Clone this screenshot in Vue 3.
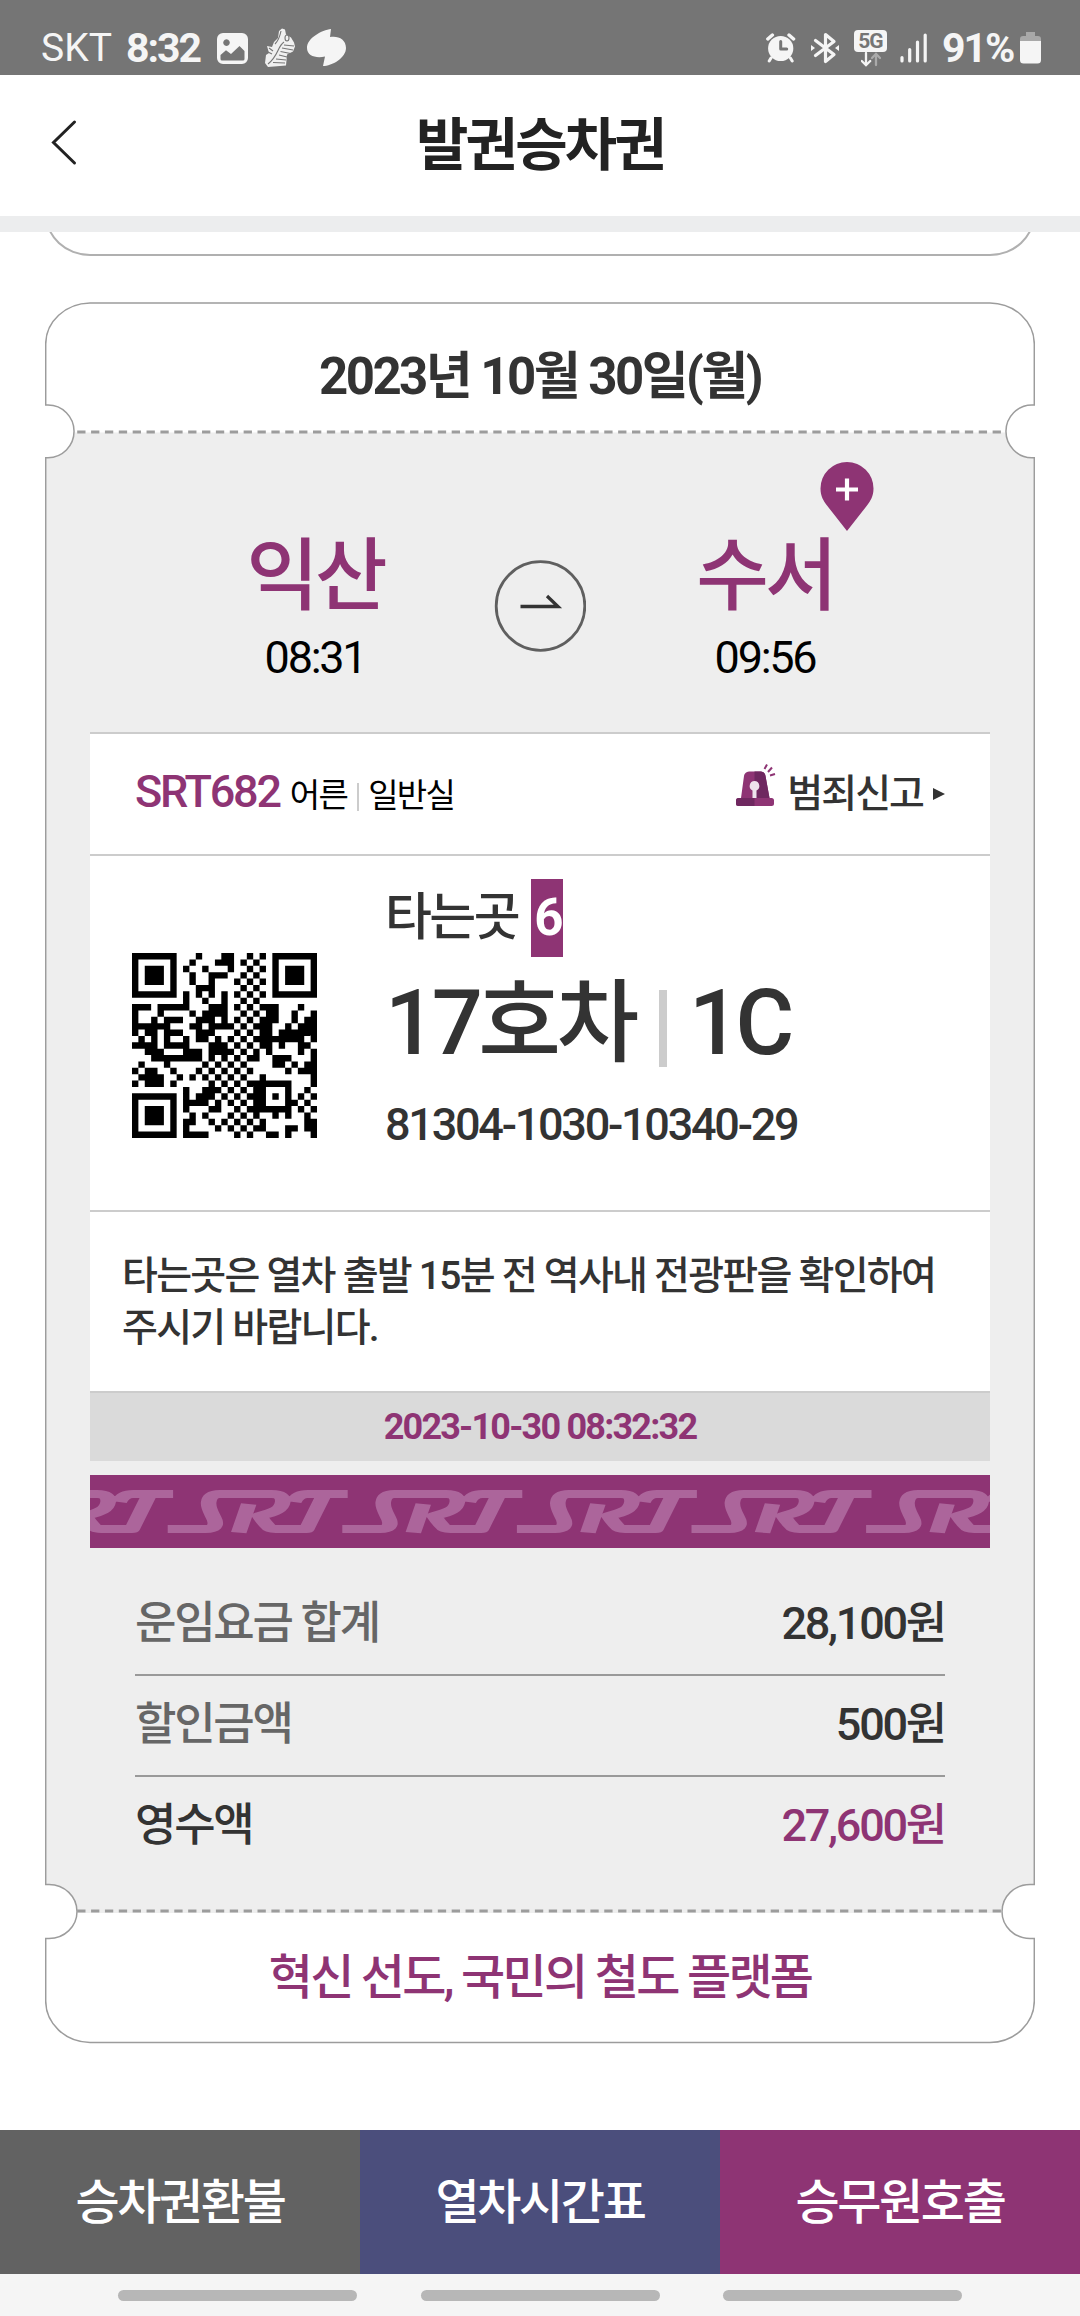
<script setup>
const qrRows = [
  '11111110001000110010101111111',
  '10000010010001110101001000001',
  '10111010100100010010101011101',
  '10111010010011100101001011101',
  '10111010010010001010101011101',
  '10000010001110000101001000001',
  '11111110101010101010101111111',
  '00000000100100100101000000000',
  '11101111100011101010111000100',
  '10001000010111100101011001001',
  '10010111001110101010111001011',
  '11111100011011110101110010111',
  '10110111001110001010110111111',
  '01010100101101010101111111101',
  '11110111100011101010110100110',
  '00111000111011110101010000101',
  '00011111111010101011001110001',
  '01000100000101010100001101011',
  '10110010001010101010000010111',
  '01111001010101010100100000001',
  '10111010000010101011111110001',
  '00000000100111010101100010010',
  '11111110101110101011101010101',
  '10000010111101010101100011010',
  '10111010100011001011111110101',
  '10111010010100010101001010010',
  '10111010110010101010100000011',
  '10000010100001010101100011011',
  '11111110111100001010011010001',
]
const qrPath = qrRows
  .flatMap((row, y) => [...row].map((c, x) => (c === '1' ? `M${x} ${y}h1v1h-1z` : '')))
  .join('')

const fares = [
  { label: '운임요금 합계', amount: '28,100원' },
  { label: '할인금액', amount: '500원' },
  { label: '영수액', amount: '27,600원', total: true },
]
const actions = [
  { label: '승차권환불', kind: 'refund' },
  { label: '열차시간표', kind: 'timetable' },
  { label: '승무원호출', kind: 'crew' },
]
const marks = [-98.9, 75.7, 250.3, 424.9, 599.5, 774.1]
</script>

<template>
  <div class="screen">
    <div class="status">
      <span class="carrier">SKT</span>
      <span class="clock">8:32</span>
      <svg class="s-gallery" width="31" height="31" viewBox="0 0 31 31">
        <path fill-rule="evenodd" fill="#f5f5f5" d="M6 0h19a6 6 0 0 1 6 6v19a6 6 0 0 1-6 6H6a6 6 0 0 1-6-6V6a6 6 0 0 1 6-6zM9.500 6.300a3.300 3.300 0 1 0 .01 0zM3.500 22v4q0 1.500 1.500 1.500h21q1.500 0 1.500-1.500v-8l-5-5-8.500 8-5-3.800z" />
      </svg>
      <svg class="s-shoe" width="32" height="40" viewBox="0 0 32 40">
        <path fill="#f0f0f0" d="M15 3l3-2.500 3 1 1 5 5 3 3 5 1 4-2 5-6 3-1 11-18 1.500-3-4 1-8 3-2-2-7 5 1 2-5 4-4z" />
        <g fill="none" stroke="#757575" stroke-width="1.100">
          <path d="M20 14C13 19 15 27 4 36M20 17l10 1M18 20l11 2M16.500 23.500l10 2M15 27l8 2M12 31l10 1M9 34.500l12 .5M17 3c-1 5-2 9-6 13M5 20l4 3M4 24l4 2" />
          <ellipse cx="23" cy="10" rx="2" ry="3" />
        </g>
      </svg>
      <svg class="s-talk" width="40" height="38" viewBox="0 0 40 38">
        <path fill="#f5f5f5" d="M24 0C15 1 0 9 0 19c0 8 9 10.500 18 8.500L16 37c9 0 23-8 23-18 0-9-8-12.500-16-11z" />
      </svg>
      <span class="spacer"></span>
      <svg class="s-alarm" width="30" height="30" viewBox="0 0 30 30">
        <circle cx="14.700" cy="15.500" r="12.600" fill="#f5f5f5" />
        <path d="M1.800 6l4.600-4M27.600 6l-4.600-4" stroke="#f5f5f5" stroke-width="3.400" stroke-linecap="round" />
        <path d="M5 25l-1.800 3M24.400 25l1.800 3" stroke="#f5f5f5" stroke-width="3" stroke-linecap="round" />
        <path d="M14.700 8.500v7.500h6" fill="none" stroke="#757575" stroke-width="3" stroke-linejoin="round" stroke-linecap="round" />
      </svg>
      <svg class="s-bt" width="28" height="32" viewBox="0 0 28 32">
        <path d="M4.500 8.500L23 22.500 14.500 29.500V2.500L23 9.500 4.500 23.500" fill="none" stroke="#f5f5f5" stroke-width="3.200" stroke-linejoin="round" stroke-linecap="round" />
        <path d="M0 13v6l4-3zM28 13v6l-4-3z" fill="#f5f5f5" />
      </svg>
      <div class="net">
        <span class="net-tag">5G</span>
        <svg width="20" height="15" viewBox="0 0 20 15">
          <path d="M5 1v12M.8 9L5 13.200 9.200 9" fill="none" stroke="#f5f5f5" stroke-width="2.300" stroke-linecap="round" />
          <path d="M15 13V2M11 6l4-4.200L19 6" fill="none" stroke="#aaa" stroke-width="2.300" stroke-linecap="round" />
        </svg>
      </div>
      <svg class="s-sig" width="28" height="30" viewBox="0 0 28 30">
        <path d="M2 24.500v3.500M9.700 16.500V28M17.500 9V28M25.200 2V28" stroke="#f5f5f5" stroke-width="3.200" stroke-linecap="round" />
      </svg>
      <span class="charge">91%</span>
      <svg class="s-bat" width="22" height="32" viewBox="0 0 22 32">
        <path d="M6 0h9v4h3q3 0 3 3v3H0V7q0-3 3-3h3z" fill="#a8a8a8" />
        <path d="M0 9h21v19q0 3.500-3.500 3.500h-14Q0 31.500 0 28z" fill="#f5f5f5" />
      </svg>
    </div>

    <header class="topbar">
      <svg class="back" width="30" height="48" viewBox="0 0 30 48">
        <path d="M24.500 3L3.500 23.500 24.500 44" fill="none" stroke="#222" stroke-width="3" stroke-linecap="round" />
      </svg>
      <h1>발권승차권</h1>
    </header>
    <div class="rule"></div>

    <div class="previous"><div class="previous-card"></div></div>

    <article class="ticket">
      <svg class="frame" width="990" height="1742" viewBox="0 0 990 1742">
        <path fill="#eee" d="M.7 155.700H3A26 26.300 0 0 0 29 130.500H961A26 26.300 0 0 0 987 155.700H989.300V1582.500H985A28.500 27 0 0 0 956 1611H33A28.500 27 0 0 0 5 1582.500H.7z" />
        <path fill="none" stroke="#9c9c9c" stroke-width="1.500" d="M.7 103V42A45 41 0 0 1 45 1H945A45 41 0 0 1 989.300 42V103H987A26 26.300 0 0 0 987 155.700H989.300V1582.500H985A28 27 0 0 0 985 1636.500H989.300V1699A45 41.500 0 0 1 945 1740.500H45A45 41.500 0 0 1 .7 1699V1636.500H4A28 27 0 0 0 4 1582.500H.7V155.700H3A26 26.300 0 0 0 3 103z" />
        <path fill="none" stroke="#9c9c9c" stroke-width="3" stroke-dasharray="8.300 5.570" d="M32.200 130H956.500M32.200 1609H956.500" />
      </svg>

      <h2 class="date">2023년 10월 30일(월)</h2>

      <section class="route">
        <div class="station">
          <strong>익산</strong>
          <span>08:31</span>
        </div>
        <svg class="direction" width="92" height="92" viewBox="0 0 92 92">
          <circle cx="46.500" cy="46" r="44.300" fill="none" stroke="#5f5f5f" stroke-width="2.800" />
          <path d="M26.500 46.500H64L53 36" fill="none" stroke="#333" stroke-width="3.300" />
        </svg>
        <div class="station">
          <strong>수서</strong>
          <span>09:56</span>
          <svg class="pin" width="54" height="70" viewBox="0 0 54 70">
            <path fill="#8e3474" d="M27 0A26.500 26.500 0 0 1 53.500 26.500C53.500 34 50.500 39 47 43.500L27 69 7 43.500C3.500 39 .5 34 .5 26.500A26.500 26.500 0 0 1 27 0z" />
            <path d="M16 27.500h22M27 16.500v22" stroke="#fff" stroke-width="4.200" />
          </svg>
        </div>
      </section>

      <section class="panel">
        <div class="train">
          <strong>SRT682</strong>
          <span class="grade">어른</span>
          <i></i>
          <span class="grade">일반실</span>
          <div class="report">
            <svg width="40" height="43" viewBox="0 0 40 43">
              <path fill="#8e3474" d="M5 34L8 12Q8.500 8 13 7.500H25Q29 8 29.500 12L33.500 34z" />
              <path fill="#6f2860" d="M18.500 7.500H25Q29 8 29.500 12L33.500 34H18.500z" />
              <rect x="0" y="34" width="38" height="8" rx="2.500" fill="#8e3474" />
              <path fill="#6f2860" d="M2.500 34H18.500V42H2.500Q0 42 0 39.500V36.500Q0 34 2.500 34z" />
              <path fill="#eee3ec" d="M18.500 17a5 5 0 0 1 2 9.500v7.500h-4v-7.500a5 5 0 0 1 2-9.500z" />
              <path d="M28.500 5L31 .5M32 8l4-4.500M34 11.500l5-1.500" stroke="#8e3474" stroke-width="2" />
            </svg>
            <span>범죄신고</span>
            <b></b>
          </div>
        </div>

        <div class="seat">
          <svg class="qr" width="185" height="185" viewBox="0 0 29 29">
            <path :d="qrPath" fill="#000" />
          </svg>
          <div class="seat-text">
            <p class="platform"><span>타는곳</span><em>6</em></p>
            <p class="car"><span>17호차</span><i></i><span>1C</span></p>
            <p class="serial">81304-1030-10340-29</p>
          </div>
        </div>

        <p class="notice">타는곳은 열차 출발 15분 전 역사내 전광판을 확인하여<br />주시기 바랍니다.</p>
        <p class="stamp">2023-10-30 08:32:32</p>
      </section>

      <svg class="band" width="900" height="73" viewBox="0 0 900 73">
        <rect width="900" height="73" fill="#8e3474" />
        <g fill="none" stroke="#ac659b" stroke-width="7.800" stroke-linejoin="round">
          <path
            v-for="x in marks"
            :key="x"
            :transform="`translate(${x} 0) scale(2 1)`"
            d="M1 54H20Q26 54 24.500 45C23 38 21 33 21.500 27Q22 19 27 19H53Q59 19 58.500 27C58 34 55 37 47 41Q49 47 51 51Q52 54 55 54H70.500L78.500 22M36.500 57.700L41.500 29M64 27Q66 19 71 19H91"
          />
        </g>
      </svg>

      <dl class="fares">
        <div v-for="f in fares" :key="f.label" :class="{ total: f.total }">
          <dt>{{ f.label }}</dt>
          <dd>{{ f.amount }}</dd>
        </div>
      </dl>

      <p class="slogan">혁신 선도, 국민의 철도 플랫폼</p>
    </article>

    <nav class="actions">
      <button v-for="a in actions" :key="a.kind" :class="a.kind">{{ a.label }}</button>
    </nav>
    <div class="gestures"><i></i><i></i><i></i></div>
  </div>
</template>

<style>
body {
  background: #fff;
}
</style>

<style scoped>
.screen {
  width: 1080px;
  height: 2316px;
  overflow: hidden;
  display: flex;
  flex-direction: column;
  background: #fff;
  color: #333;
  font-family: Roboto, "Noto Sans CJK KR", sans-serif;
  font-weight: 500;
}
.screen > * {
  flex: none;
}
.screen * {
  box-sizing: border-box;
  letter-spacing: -0.05em;
}
p, h1, h2, dl, dd {
  margin: 0;
}
svg {
  display: block;
  flex: none;
}

.status {
  height: 75px;
  padding: 21px 38px 0 41px;
  display: flex;
  align-items: center;
  background: #757575;
  color: #f5f5f5;
  line-height: 54px;
}
.status .carrier {
  width: 85px;
  font-size: 39px;
  font-weight: 400;
  letter-spacing: 0;
}
.status .clock,
.status .charge {
  font-size: 41px;
  font-weight: 700;
  letter-spacing: -2px;
}
.clock {
  width: 91px;
}
.s-shoe {
  margin-left: 16px;
}
.s-talk {
  margin-left: 11px;
}
.spacer {
  flex: 1;
}
.s-bt {
  margin-left: 15px;
}
.net {
  width: 33px;
  height: 37px;
  margin-left: 15px;
  display: flex;
  flex-direction: column;
  align-items: center;
}
.net-tag {
  width: 33px;
  height: 22px;
  border-radius: 4px;
  background: #f5f5f5;
  color: #757575;
  font-size: 21px;
  font-weight: 700;
  line-height: 22px;
  text-align: center;
}
.s-sig {
  margin-left: 13px;
}
.charge {
  width: 78px;
  margin-left: 14px;
}

.topbar {
  height: 141px;
  position: relative;
  display: flex;
  align-items: center;
  justify-content: center;
}
.topbar h1 {
  font-size: 57px;
  font-weight: 700;
  color: #222;
  line-height: 80px;
}
.back {
  position: absolute;
  left: 50px;
  top: 44px;
}
.rule {
  height: 16px;
  background: #ecedee;
}

.previous {
  height: 24px;
  padding: 0 45px;
  overflow: hidden;
  display: flex;
  align-items: flex-end;
}
.previous-card {
  flex: 1;
  height: 100px;
  border: 2px solid #b0b0b0;
  border-radius: 45px / 42px;
}

.ticket {
  position: relative;
  width: 990px;
  height: 1742px;
  margin: 46px 45px 86px;
  padding: 0 45px;
  display: flex;
  flex-direction: column;
}
.ticket > * {
  position: relative;
}
.ticket > .frame {
  position: absolute;
  left: 0;
  top: 0;
}
.date {
  height: 130px;
  padding-top: 20px;
  font-size: 51px;
  font-weight: 700;
  line-height: 110px;
  text-align: center;
}

.route {
  height: 300px;
  padding: 100px 90px 0;
  display: grid;
  grid-template-columns: 270px 1fr 270px;
  justify-items: center;
  align-items: start;
}
.station {
  position: relative;
  width: 270px;
  display: flex;
  flex-direction: column;
  align-items: center;
  gap: 6px;
}
.station strong {
  font-size: 79px;
  font-weight: 500;
  line-height: 90px;
  color: #8e3474;
}
.station span {
  font-size: 45px;
  font-weight: 400;
  line-height: 60px;
  color: #000;
}
.direction {
  margin-top: 28px;
}
.pin {
  position: absolute;
  left: 190px;
  top: -70px;
}

.panel {
  background: #fff;
  border-top: 2px solid #ccc;
}
.train {
  height: 120px;
  padding: 28px 45px 0;
  display: flex;
  align-items: baseline;
  line-height: 60px;
}
.train strong {
  font-size: 45px;
  font-weight: 500;
  color: #8e3474;
  margin-right: 10px;
}
.grade {
  font-size: 33px;
  font-weight: 400;
  color: #000;
}
.train > i {
  width: 2px;
  height: 28px;
  margin: 0 9px 0 10px;
  background: #ccc;
  transform: translateY(4px);
}
.report {
  margin-left: auto;
  display: flex;
  align-items: baseline;
  font-size: 39px;
}
.report svg {
  margin-right: 11px;
}
.report b {
  margin-left: 10px;
  border-left: 12px solid #333;
  border-top: 6px solid transparent;
  border-bottom: 6px solid transparent;
  transform: translateY(-7px);
}

.seat {
  height: 356px;
  border-top: 2px solid #ccc;
  padding: 22px 0 0 42px;
  display: flex;
}
.qr {
  margin-top: 75px;
}
.seat-text {
  margin-left: 68px;
  padding-top: 1px;
}
.platform {
  display: flex;
  gap: 13px;
  font-size: 51px;
  line-height: 78px;
}
.platform em {
  padding-left: 3px;
  width: 32px;
  background: #8e3474;
  color: #fff;
  font-style: normal;
  font-weight: 700;
}
.car {
  display: flex;
  font-size: 90px;
  line-height: 134px;
}
.car i {
  width: 8px;
  height: 77px;
  margin: 33px 22px 0 24px;
  background: #ccc;
}
.serial {
  font-size: 45px;
  line-height: 68px;
}
.notice {
  height: 181px;
  border-top: 2px solid #ccc;
  padding: 39px 0 0 32px;
  font-size: 39px;
  line-height: 51.500px;
  white-space: nowrap;
}
.panel .notice {
  letter-spacing: -0.045em;
}
.stamp {
  height: 70px;
  border-top: 2px solid #ccc;
  background: #dadada;
  color: #8e3474;
  font-size: 36px;
  font-weight: 700;
  line-height: 68px;
  text-align: center;
}
.band {
  margin-top: 14px;
}

.fares {
  margin: 27px 45px 0;
}
.fares div {
  height: 101px;
  display: flex;
  justify-content: space-between;
  border-bottom: 2px solid #999;
  font-size: 45px;
  line-height: 97px;
}
.fares dt {
  color: #666;
}
.fares .total {
  border-bottom: 0;
}
.fares .total dt {
  color: #333;
}
.fares .total dd {
  color: #8e3474;
}

.ticket .slogan {
  margin-top: auto;
  height: 132px;
  padding-top: 1px;
  font-size: 48px;
  line-height: 129px;
  color: #8e3474;
  text-align: center;
  letter-spacing: -0.056em;
}

.actions {
  height: 144px;
  display: grid;
  grid-template-columns: repeat(3, 1fr);
}
.actions button {
  border: 0;
  padding: 0 0 8px;
  font-family: inherit;
  font-weight: 500;
  font-size: 48px;
  color: #fff;
}
.refund {
  background: #626262;
}
.timetable {
  background: #4b4e7c;
}
.crew {
  background: #8e3474;
}
.gestures {
  height: 42px;
  padding: 16px 118px 0;
  display: flex;
  justify-content: space-between;
  background: #f5f5f5;
}
.gestures i {
  width: 239px;
  height: 11px;
  border-radius: 6px;
  background: #b7b7b7;
}
</style>
